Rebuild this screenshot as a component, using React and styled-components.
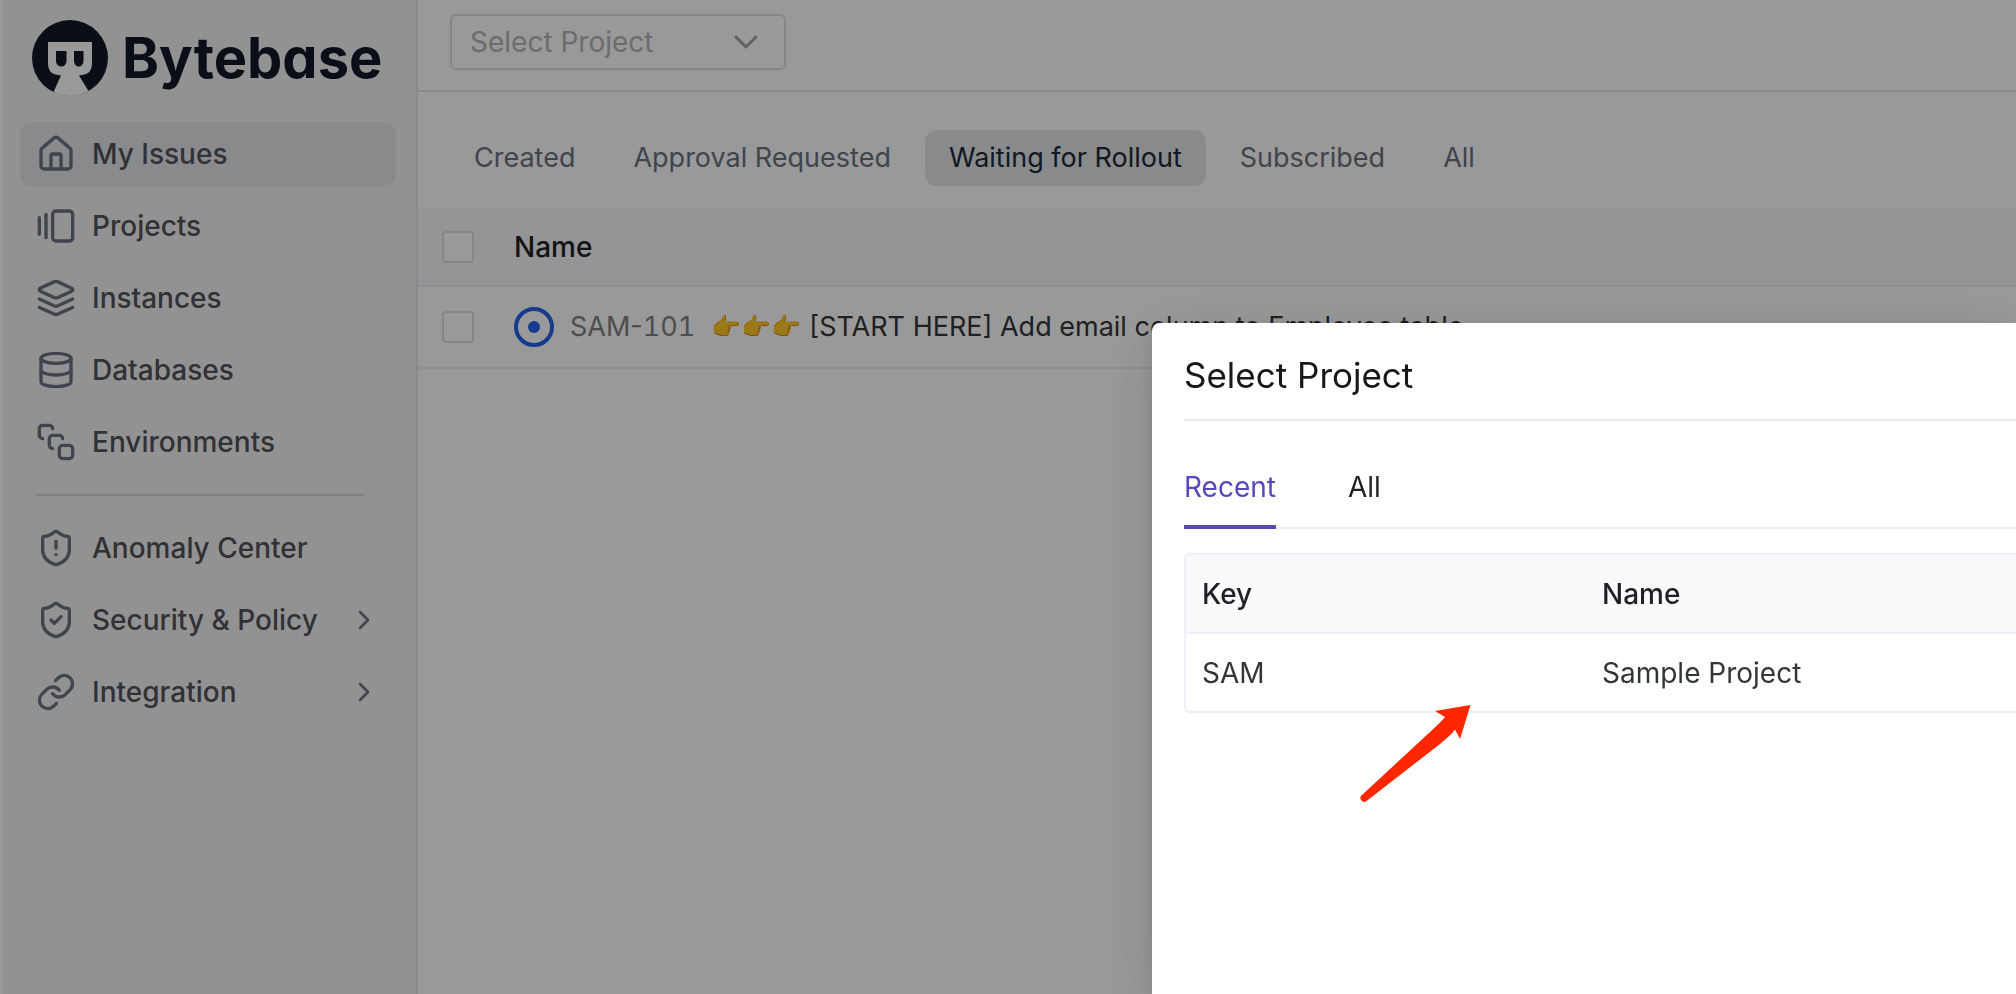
import React from "react";
import styled, { createGlobalStyle } from "styled-components";
import { House, GalleryHorizontalEnd, Database, SquareStack, ShieldAlert, ShieldCheck, Link, ChevronRight } from "lucide-react";

const GlobalStyle = createGlobalStyle`
  *, *::before, *::after { box-sizing: border-box; }
  body {
    margin: 0;
    overflow: hidden;
    background: #fff;
    color: #333639;
    font: 400 28px/44px Inter, "Liberation Sans", sans-serif;
  }
  button, select, input { font: inherit; margin: 0; }
`;

const Page = styled.div`
  display: flex;
  height: 100vh;
`;

const Sidebar = styled.aside`
  flex: none;
  width: 418px;
  padding: 20px 20px 0 18px;
  background: #f3f4f6;
  border-left: 2px solid #fff;
  border-right: 2px solid #e5e7eb;
`;

const Brand = styled.a`
  display: flex;
  align-items: center;
  gap: 14px;
  height: 76px;
  padding-left: 12px;
  margin-bottom: 26px;
  color: #111827;
  font: 700 56px/76px Inter, "Liberation Sans", sans-serif;
  font-feature-settings: "cv11";
  text-decoration: none;
`;

const Nav = styled.nav`
  display: flex;
  flex-direction: column;
  gap: 8px;
`;

const NavLink = styled.a`
  display: flex;
  align-items: center;
  gap: 16px;
  height: 64px;
  padding: 0 16px;
  border-radius: 12px;
  background: ${(p) => (p.$active ? "#e4e7e9" : "transparent")};
  color: #52525b;
  font-weight: 500;
  text-decoration: none;
  svg { flex: none; color: #6b7280; }
`;

const NavLabel = styled.span`
  flex: 1;
  white-space: nowrap;
`;

const Divider = styled.hr`
  width: 328px;
  height: 2px;
  margin: 12px 16px;
  border: 0;
  background: #d1d5db;
`;

const Main = styled.main`
  flex: 1;
  min-width: 0;
`;

const TopBar = styled.header`
  display: flex;
  padding: 14px 32px 20px;
  border-bottom: 2px solid #e5e7eb;
`;

const SelectBox = styled.div`
  display: grid;
  align-items: center;
  width: 336px;
  > * { grid-area: 1 / 1; }
  svg { justify-self: end; margin-right: 24px; pointer-events: none; }
`;

const ProjectSelect = styled.select`
  appearance: none;
  width: 100%;
  height: 56px;
  padding: 0 60px 0 18px;
  border: 2px solid #e0e0e6;
  border-radius: 6px;
  background: #fff;
  color: #b4b4b8;
`;

const FilterBar = styled.div`
  display: flex;
  gap: 10px;
  padding: 38px 32px 22px;
  font-size: 27px;
`;

const FilterButton = styled.button`
  height: 56px;
  padding: 0 24px;
  border: 0;
  border-radius: 12px;
  background: ${(p) => (p.$active ? "#e4e7e9" : "transparent")};
  color: ${(p) => (p.$active ? "#1f2937" : "#6b7280")};
  white-space: nowrap;
`;

const IssueTable = styled.table`
  width: 100%;
  border-collapse: separate;
  border-spacing: 0;
  text-align: left;
  white-space: nowrap;
  th, td { padding: 0; border-bottom: 2px solid #efeff5; }
  th { height: 79px; background: #f9f9fc; color: #1f2225; font-weight: 500; }
  td { height: 82px; }
`;

const CheckCell = styled.td`
  width: 96px;
`;

const Check = styled.input`
  display: block;
  appearance: none;
  width: 32px;
  height: 32px;
  margin-left: 24px;
  border: 2px solid #e0e0e6;
  border-radius: 4px;
  background: #fff;
`;

const Issue = styled.div`
  display: flex;
  align-items: center;
  gap: 16px;
  font-size: 27px;
`;

const StatusIcon = styled.svg`
  flex: none;
  width: 40px;
  height: 40px;
`;

const IssueKey = styled.span`
  color: #808085;
`;

const IssueNumber = styled.span`
  font-variant-numeric: tabular-nums;
`;

const IssueTitle = styled.span`
  display: flex;
  align-items: center;
  gap: 8px;
`;

const Emoji = styled.span`
  font-size: 24px;
`;

const Overlay = styled.div`
  position: fixed;
  inset: 0;
  display: grid;
  grid-template-columns: 4fr 3fr;
  padding-top: 323px;
  background: rgba(0, 0, 0, 0.4);
`;

const Dialog = styled.section`
  position: relative;
  grid-column: 2;
  min-width: 0;
  padding: 28px 0 0 32px;
  border-radius: 8px 0 0 0;
  background: #fff;
  box-shadow: 0 12px 64px rgba(0, 0, 0, 0.12), 0 6px 16px rgba(0, 0, 0, 0.12);
`;

const DialogTitle = styled.h2`
  margin: 0;
  padding-bottom: 20px;
  border-bottom: 2px solid #e5e7eb;
  color: #18181b;
  font-size: 35px;
  line-height: 48px;
  font-weight: 400;
`;

const TabList = styled.div`
  display: flex;
  gap: 72px;
  margin: 40px 0 24px;
  box-shadow: inset 0 -2px #efeff5;
`;

const Tab = styled.button`
  height: 68px;
  padding: 0 0 12px;
  border: 0;
  border-bottom: 4px solid ${(p) => (p.$active ? "#5548be" : "transparent")};
  background: none;
  color: ${(p) => (p.$active ? "#5548be" : "#1f2225")};
`;

const ProjectTable = styled.table`
  width: 100%;
  table-layout: fixed;
  border: 2px solid #efeff5;
  border-right: 0;
  border-radius: 6px 0 0 6px;
  border-spacing: 0;
  text-align: left;
  th, td { height: 77px; padding: 0 16px; }
  th {
    height: 79px;
    border-bottom: 2px solid #efeff5;
    background: #fafafc;
    color: #1f2225;
    font-weight: 500;
  }
  th:first-child { width: 400px; border-top-left-radius: 4px; }
`;

const Pointer = styled.svg`
  position: absolute;
  left: 208px;
  top: 381px;
  width: 112px;
  height: 98px;
`;

const LayersIcon = ({ size }) => (
  <svg width={size} height={size} viewBox="0 0 24 24" fill="none" stroke="currentColor" strokeWidth="2" strokeLinecap="round" strokeLinejoin="round">
    <path d="m12.83 2.18a2 2 0 0 0-1.66 0L2.6 6.08a1 1 0 0 0 0 1.83l8.58 3.91a2 2 0 0 0 1.66 0l8.58-3.9a1 1 0 0 0 0-1.83Z" />
    <path d="m22 17.65-9.17 4.16a2 2 0 0 1-1.66 0L2 17.65" />
    <path d="m22 12.65-9.17 4.16a2 2 0 0 1-1.66 0L2 12.65" />
  </svg>
);

const Logo = () => (
  <svg width="76" height="76" viewBox="0 0 76 76" aria-hidden="true">
    <circle cx="38" cy="38" r="38" fill="#111827" />
    <path d="M16 22H60V44Q60 54 50 55L47 55.500L56.500 71Q48 76 38 76T21.500 72L29 55.500L26 55Q16 54 16 44Z" fill="#fff" />
    <path d="M24 31H34.500V41A5.250 5.500 0 0 1 24 41ZM42 31H51.500V41A4.750 5.500 0 0 1 42 41Z" fill="#111827" />
  </svg>
);

const primaryNav = [
  { label: "My Issues", Icon: House, active: true },
  { label: "Projects", Icon: GalleryHorizontalEnd },
  { label: "Instances", Icon: LayersIcon },
  { label: "Databases", Icon: Database },
  { label: "Environments", Icon: SquareStack },
];

const secondaryNav = [
  { label: "Anomaly Center", Icon: ShieldAlert },
  { label: "Security & Policy", Icon: ShieldCheck, expandable: true },
  { label: "Integration", Icon: Link, expandable: true },
];

const filters = ["Created", "Approval Requested", "Waiting for Rollout", "Subscribed", "All"];

const NavItem = ({ label, Icon, active, expandable }) => (
  <NavLink href="#" $active={active}>
    <Icon size={40} />
    <NavLabel>{label}</NavLabel>
    {expandable && <ChevronRight size={32} />}
  </NavLink>
);

export default function App() {
  return (
    <>
      <GlobalStyle />
      <Page>
        <Sidebar>
          <Brand href="#"><Logo />Bytebase</Brand>
          <Nav>
            {primaryNav.map((item) => <NavItem key={item.label} {...item} />)}
            <Divider />
            {secondaryNav.map((item) => <NavItem key={item.label} {...item} />)}
          </Nav>
        </Sidebar>
        <Main>
          <TopBar>
            <SelectBox>
              <ProjectSelect aria-label="Project">
                <option>Select Project</option>
              </ProjectSelect>
              <svg width="32" height="32" viewBox="0 0 32 32" fill="none" stroke="#a1a4ab" strokeWidth="3" strokeLinecap="round" strokeLinejoin="round">
                <path d="M6 11L16 21L26 11" />
              </svg>
            </SelectBox>
          </TopBar>
          <FilterBar>
            {filters.map((f) => (
              <FilterButton key={f} type="button" $active={f === "Waiting for Rollout"}>{f}</FilterButton>
            ))}
          </FilterBar>
          <IssueTable>
            <thead>
              <tr>
                <CheckCell as="th"><Check type="checkbox" aria-label="Select all issues" /></CheckCell>
                <th>Name</th>
              </tr>
            </thead>
            <tbody>
              <tr>
                <CheckCell><Check type="checkbox" aria-label="Select SAM-101" /></CheckCell>
                <td>
                  <Issue>
                    <StatusIcon viewBox="0 0 40 40">
                      <circle cx="20" cy="20" r="18" fill="#fff" stroke="#2563eb" strokeWidth="4" />
                      <circle cx="20" cy="20" r="6" fill="#2563eb" />
                    </StatusIcon>
                    <IssueKey>SAM-<IssueNumber>101</IssueNumber></IssueKey>
                    <IssueTitle>
                      <Emoji>👉👉👉</Emoji>
                      <span>[START HERE] Add email column to Employee table</span>
                    </IssueTitle>
                  </Issue>
                </td>
              </tr>
            </tbody>
          </IssueTable>
        </Main>
      </Page>
      <Overlay>
        <Dialog role="dialog" aria-labelledby="dialog-title">
          <DialogTitle id="dialog-title">Select Project</DialogTitle>
          <TabList role="tablist">
            <Tab type="button" role="tab" aria-selected="true" $active>Recent</Tab>
            <Tab type="button" role="tab" aria-selected="false">All</Tab>
          </TabList>
          <ProjectTable>
            <thead><tr><th>Key</th><th>Name</th></tr></thead>
            <tbody><tr><td>SAM</td><td>Sample Project</td></tr></tbody>
          </ProjectTable>
          <Pointer viewBox="0 0 112 98" aria-hidden="true">
            <path d="M110.500 1L75 7L85 13Q84 15 70 28L2 91A3 3 0 0 0 6.500 97L80 40Q92 30 95 25.500L100 35Z" fill="#ff2600" />
          </Pointer>
        </Dialog>
      </Overlay>
    </>
  );
}
